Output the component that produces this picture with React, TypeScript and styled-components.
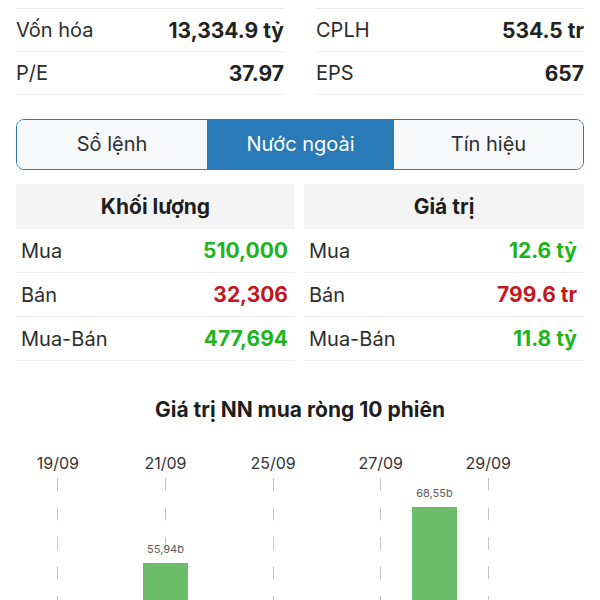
import styled, { createGlobalStyle } from "styled-components";

const GlobalStyle = createGlobalStyle`
  html, body {
    margin: 0;
    padding: 0;
    overflow: hidden;
    background: #fff;
  }
  body {
    font-family: Inter, "Noto Sans", "Liberation Sans", sans-serif;
    color: #222;
  }
`;

const Page = styled.div`
  padding: 8px 16px 0;
  width: 600px;
  height: 600px;
  overflow: hidden;
  box-sizing: border-box;
`;

const StatGrid = styled.div`
  display: grid;
  grid-template-columns: 1fr 1fr;
  column-gap: 32px;
`;

const StatColumn = styled.div`
  display: flex;
  flex-direction: column;
`;

const StatRow = styled.div`
  display: flex;
  align-items: center;
  justify-content: space-between;
  height: 42px;
  border-top: 1px solid #ededed;
  font-size: 20px;
  &:last-child {
    border-bottom: 1px solid #ededed;
  }
`;

const StatLabel = styled.span`
  color: #2e2e2e;
`;

const StatValue = styled.span`
  font-weight: 700;
  font-size: 21px;
  color: #222;
`;

const Tabs = styled.div`
  margin-top: 24px;
  display: grid;
  grid-template-columns: 190px 187px 1fr;
  height: 51px;
  border: 1.5px solid #2a7ab7;
  border-radius: 8px;
  overflow: hidden;
  box-sizing: border-box;
`;

const Tab = styled.div<{ $active?: boolean }>`
  display: flex;
  align-items: center;
  justify-content: center;
  padding-bottom: 2px;
  font-size: 20px;
  background: ${(p) => (p.$active ? "#2a7ab7" : "#f7f8fa")};
  color: ${(p) => (p.$active ? "#fff" : "#2e2e2e")};
`;

const Tables = styled.div`
  margin-top: 14px;
  display: grid;
  grid-template-columns: 279px 1fr;
  column-gap: 9px;
`;

const Table = styled.div`
  display: flex;
  flex-direction: column;
`;

const TableHead = styled.div`
  height: 45px;
  display: flex;
  align-items: center;
  justify-content: center;
  background: #f4f4f4;
  font-size: 21px;
  font-weight: 700;
  color: #1e1e1e;
`;

const TableRow = styled.div`
  height: 43px;
  display: flex;
  align-items: center;
  justify-content: space-between;
  padding: 0 7px 0 5px;
  border-bottom: 1px solid #efefef;
  font-size: 20px;
`;

const Amount = styled.span<{ $tone: "up" | "down" }>`
  font-weight: 700;
  font-size: 21px;
  color: ${(p) => (p.$tone === "up" ? "#1db51d" : "#c3161d")};
`;

const ChartTitle = styled.h3`
  margin: 36px 0 0;
  text-align: center;
  font-size: 21px;
  line-height: 26px;
  font-weight: 700;
  color: #1e1e1e;
`;

const Chart = styled.div`
  margin-top: 30px;
  padding: 0 15px;
  display: flex;
`;

const Slot = styled.div`
  flex: 1;
  display: flex;
  flex-direction: column;
  align-items: center;
`;

const DateLabel = styled.div`
  height: 20px;
  line-height: 20px;
  font-size: 16px;
  color: #333;
`;

const Plot = styled.div<{ $grid: boolean }>`
  margin-top: 5px;
  align-self: stretch;
  height: 333px;
  display: flex;
  flex-direction: column;
  align-items: center;
  justify-content: flex-end;
  background-image: ${(p) =>
    p.$grid
      ? "linear-gradient(to bottom, #c4c4c4 0 13px, transparent 13px 100%)"
      : "none"};
  background-size: 1px 29.5px;
  background-repeat: repeat-y;
  background-position: center top;
`;

const BarValue = styled.div`
  font-size: 11px;
  line-height: 14px;
  color: #5c5c5c;
  margin-bottom: 7px;
`;

const Bar = styled.div`
  width: 45px;
  background: #6cbd69;
`;

const stats = [
  [
    { label: "Vốn hóa", value: "13,334.9 tỷ" },
    { label: "P/E", value: "37.97" },
  ],
  [
    { label: "CPLH", value: "534.5 tr" },
    { label: "EPS", value: "657" },
  ],
];

const tables = [
  {
    title: "Khối lượng",
    rows: [
      { label: "Mua", value: "510,000", tone: "up" as const },
      { label: "Bán", value: "32,306", tone: "down" as const },
      { label: "Mua-Bán", value: "477,694", tone: "up" as const },
    ],
  },
  {
    title: "Giá trị",
    rows: [
      { label: "Mua", value: "12.6 tỷ", tone: "up" as const },
      { label: "Bán", value: "799.6 tr", tone: "down" as const },
      { label: "Mua-Bán", value: "11.8 tỷ", tone: "up" as const },
    ],
  },
];

const sessions = [
  { date: "19/09", value: 12.4 },
  { date: "20/09", value: 8.73 },
  { date: "21/09", value: 55.94 },
  { date: "22/09", value: 21.05 },
  { date: "25/09", value: 4.12 },
  { date: "26/09", value: 17.38 },
  { date: "27/09", value: 9.6 },
  { date: "28/09", value: 68.55 },
  { date: "29/09", value: 14.2 },
  { date: "02/10", value: 6.91 },
];

const PX_PER_BILLION = 4.433;

const App = () => {
  return (
    <Page>
      <GlobalStyle />
      <StatGrid>
        {stats.map((col, i) => (
          <StatColumn key={i}>
            {col.map((s) => (
              <StatRow key={s.label}>
                <StatLabel>{s.label}</StatLabel>
                <StatValue>{s.value}</StatValue>
              </StatRow>
            ))}
          </StatColumn>
        ))}
      </StatGrid>

      <Tabs>
        <Tab>Sổ lệnh</Tab>
        <Tab $active>Nước ngoài</Tab>
        <Tab>Tín hiệu</Tab>
      </Tabs>

      <Tables>
        {tables.map((t) => (
          <Table key={t.title}>
            <TableHead>{t.title}</TableHead>
            {t.rows.map((r) => (
              <TableRow key={r.label}>
                <StatLabel>{r.label}</StatLabel>
                <Amount $tone={r.tone}>{r.value}</Amount>
              </TableRow>
            ))}
          </Table>
        ))}
      </Tables>

      <ChartTitle>Giá trị NN mua ròng 10 phiên</ChartTitle>
      <Chart>
        {sessions.map((s, i) => (
          <Slot key={s.date}>
            <DateLabel>{i % 2 === 0 ? s.date : ""}</DateLabel>
            <Plot $grid={i % 2 === 0}>
              <BarValue>{s.value.toFixed(2).replace(".", ",")}b</BarValue>
              <Bar style={{ height: s.value * PX_PER_BILLION }} />
            </Plot>
          </Slot>
        ))}
      </Chart>
    </Page>
  );
};

export default App;
